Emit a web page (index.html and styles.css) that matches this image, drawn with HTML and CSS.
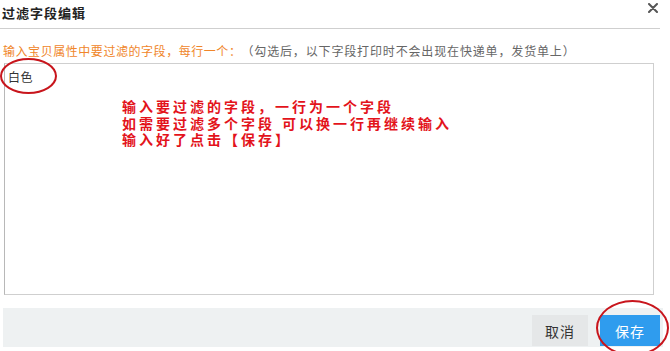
FILE: index.html
```html
<!DOCTYPE html>
<html lang="zh-CN">
<head>
<meta charset="utf-8">
<title>过滤字段编辑</title>
<link rel="stylesheet" href="styles.css">
</head>
<body>
<div class="dialog">
  <div class="header">
    <span class="title">过滤字段编辑</span>
    <svg class="close" width="10" height="10" viewBox="0 0 10 10"><path d="M1 1 L9 9 M9 1 L1 9" stroke="#555" stroke-width="2" stroke-linecap="round"/></svg>
  </div>
  <div class="hint"><span class="hint-strong">输入宝贝属性中要过滤的字段，每行一个：</span><span class="hint-note">（勾选后，以下字段打印时不会出现在快递单，发货单上）</span></div>
  <div class="box">
    <div class="value">白色</div>
    <div class="note">
      <div>输入要过滤的字段，一行为一个字段</div>
      <div>如需要过滤多个字段 可以换一行再继续输入</div>
      <div>输入好了点击【保存】</div>
    </div>
  </div>
  <div class="footer">
    <button class="btn btn-cancel">取消</button>
    <button class="btn btn-save">保存</button>
  </div>
  <div class="mark mark-value"></div>
  <div class="mark mark-save"></div>
</div>
</body>
</html>
```
FILE: styles.css
```css
html, body {
  margin: 0;
  padding: 0;
  background: #fff;
  overflow: hidden;
}
body {
  font-family: "Noto Sans CJK SC", "Noto Sans", sans-serif;
  color: #333;
  text-spacing-trim: space-all;
}
.dialog {
  position: relative;
  width: 670px;
  height: 351px;
}
.header {
  height: 28px;
  margin-right: 10px;
  padding: 0 2px;
  border-bottom: 1px solid #cfcfcf;
  display: flex;
  align-items: center;
  justify-content: space-between;
}
.title {
  font-size: 13px;
  font-weight: bold;
  letter-spacing: 1px;
  color: #222;
  line-height: 16px;
  margin-top: -2px;
}
.close {
  margin-top: -12px;
}
.hint {
  padding: 14px 0 0 3px;
  font-size: 12px;
  letter-spacing: 0.55px;
  line-height: 16px;
  color: #666;
  white-space: nowrap;
}
.hint-strong {
  color: #f0862a;
}
.hint-note {
  letter-spacing: 0.85px;
}
.box {
  margin: 4px 0 0 4px;
  width: 650px;
  height: 232px;
  box-sizing: border-box;
  border: 1px solid #cfcfcf;
  border-left-color: #b8b8b8;
  padding: 5px 0 0 3px;
}
.value {
  font-size: 12px;
  letter-spacing: 0.5px;
  line-height: 16px;
  color: #333;
}
.note {
  margin: 14px 0 0 114px;
  font-family: "Liberation Sans", "Noto Sans CJK SC", sans-serif;
  font-size: 14px;
  font-weight: bold;
  letter-spacing: 3px;
  line-height: 16.5px;
  color: #e3131b;
  white-space: nowrap;
}
.footer {
  margin: 13px 0 0 3px;
  width: 660px;
  height: 39px;
  box-sizing: border-box;
  background: #eef1f2;
  display: flex;
  justify-content: flex-end;
  align-items: flex-start;
  gap: 12px;
  padding: 7px 3px 0 0;
}
.btn {
  height: 31px;
  border: none;
  margin: 0;
  padding: 0;
  font-family: inherit;
  font-size: 14px;
  letter-spacing: 1px;
}
.btn-cancel {
  width: 56px;
  background: #e5e7e8;
  color: #333;
}
.btn-save {
  width: 60px;
  background: #2f9cee;
  color: #fff;
}
.mark {
  position: absolute;
  border: 2px solid #c8151c;
  border-radius: 50%;
  box-sizing: border-box;
}
.mark-value {
  left: 0;
  top: 58px;
  width: 57px;
  height: 36px;
}
.mark-save {
  left: 596px;
  top: 300px;
  width: 73px;
  height: 56px;
}
```
